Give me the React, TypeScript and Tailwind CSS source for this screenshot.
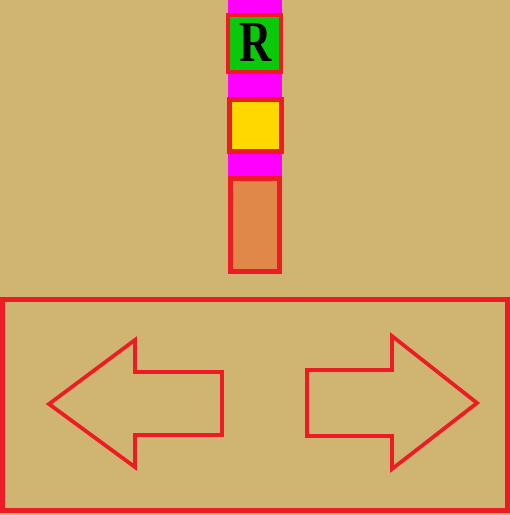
export default function App() {
  return (
    <div className="w-[510px] h-[515px] bg-[#cfb571] flex flex-col">
      {/* top stack */}
      <div className="h-[297px] flex justify-center">
        <div className="w-[54px] flex flex-col">
          <div className="bg-[#ff00ff] h-[176px] flex flex-col pt-[13px]">
            <div className="-ml-[2px] w-[57px] h-[61px] border-4 border-[#ed1c24] bg-[#0ac80a] flex items-center justify-center">
              <span className="font-['Liberation_Serif',serif] font-bold text-[56px] leading-[50px] text-black scale-x-[0.8] -translate-y-[2px] translate-x-[1px]">
                R
              </span>
            </div>
            <div className="mt-[23px] -ml-[1px] w-[57px] h-[57px] border-[5px] border-[#ed1c24] bg-[#ffd800]" />
          </div>
          <div className="h-[98px] border-[5px] border-[#ed1c24] bg-[#e0884a]" />
        </div>
      </div>

      {/* controls */}
      <div className="h-[216px] border-[5px] border-[#ed1c24]">
        <svg width="500" height="206" viewBox="0 0 500 206" fill="none" stroke="#ed1c24" strokeWidth="4">
          <polygon points="44,102 130,38 130,70 217,70 217,133 130,133 130,165" />
          <polygon points="302,68 387,68 387,34 472,101 387,167 387,134 302,134" />
        </svg>
      </div>
    </div>
  );
}
